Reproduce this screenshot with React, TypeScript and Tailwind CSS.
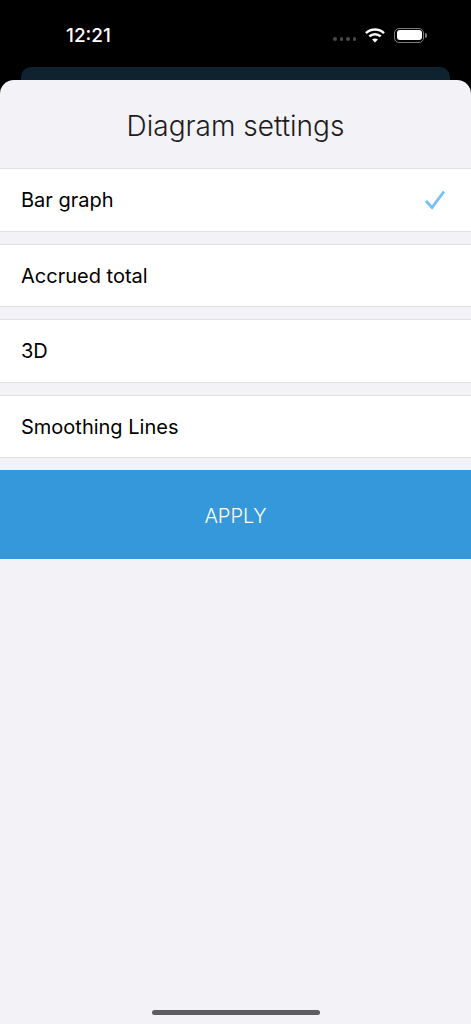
const rows = [
  { label: 'Bar graph', checked: true },
  { label: 'Accrued total', checked: false },
  { label: '3D', checked: false },
  { label: 'Smoothing Lines', checked: false },
];

function StatusBar() {
  return (
    <div className="h-[67px] flex items-start justify-between pl-[66px] pr-[44px] pt-[25px]">
      <span className="text-white text-[19px] leading-[22px] font-medium">12:21</span>
      <div className="flex items-center gap-[9px] mt-[2px] pl-[1px]">
        <div className="flex gap-[3px] mt-[8px]">
          <div className="w-[3.5px] h-[3.5px] rounded-full bg-[#4a4a4a]" />
          <div className="w-[3.5px] h-[3.5px] rounded-full bg-[#4a4a4a]" />
          <div className="w-[3.5px] h-[3.5px] rounded-full bg-[#4a4a4a]" />
          <div className="w-[3.5px] h-[3.5px] rounded-full bg-[#4a4a4a]" />
        </div>
        <svg width="20" height="15" viewBox="0 0 20 15" fill="none" stroke="white" strokeWidth="2.5" className="mt-[1px]">
          <path d="M1 5.2 C6 0.4 14 0.4 19 5.2" />
          <path d="M4.3 8.4 C7.6 5.4 12.4 5.4 15.7 8.4" />
          <path d="M10 14.6 L7.1 11.6 C8.8 10.2 11.2 10.2 12.9 11.6 Z" fill="white" stroke="none" />
        </svg>
        <div className="flex items-center gap-[1px]">
          <div className="w-[30px] h-[15px] rounded-[5px] border border-[#7c7c7c] p-[1.5px]">
            <div className="w-full h-full rounded-[3px] bg-white" />
          </div>
          <div className="w-[2px] h-[5px] rounded-r-sm bg-[#7c7c7c]" />
        </div>
      </div>
    </div>
  );
}

export default function App() {
  return (
    <div className="w-[471px] h-[1024px] bg-black overflow-hidden flex flex-col font-['Inter','Liberation_Sans',sans-serif]">
      <StatusBar />
      <div className="mx-[21px] h-[30px] shrink-0 rounded-t-[10px] bg-[#0f2230]" />
      <div className="-mt-[17px] flex-1 rounded-t-[14px] bg-[#f2f2f7] relative">
        <h1 className="h-[88px] pt-[3px] flex items-center justify-center text-[28px] font-light text-[#1c1c1e]">
          Diagram settings
        </h1>
        <div className="flex flex-col gap-[12px]">
          {rows.map((row) => (
            <div
              key={row.label}
              className="h-[63.5px] pt-[1px] bg-white border-y border-[#e0e0e3] flex items-center justify-between pl-[21px] pr-[25px]"
            >
              <span className="text-[20px] text-black">{row.label}</span>
              {row.checked && (
                <svg width="22" height="20" viewBox="0 0 22 20" fill="none" stroke="#73c0f7" strokeWidth="2.8">
                  <path d="M2 11 L8 17.5 L20 1.5" />
                </svg>
              )}
            </div>
          ))}
          <button className="h-[89px] pt-[2px] bg-[#3498db] text-white text-[20px] font-light">APPLY</button>
        </div>
        <div className="absolute bottom-[9px] left-[152px] w-[168px] h-[5px] rounded-full bg-[#5e5e60]" />
      </div>
    </div>
  );
}
